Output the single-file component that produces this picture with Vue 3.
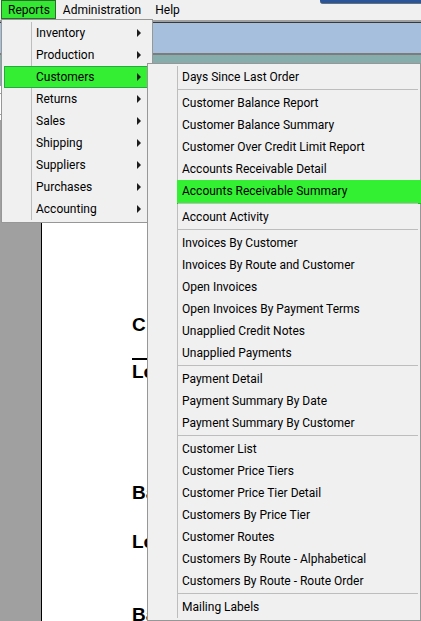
<template>
  <div class="app">
    <nav class="menubar">
      <div class="menu-root">
        <button type="button" class="root-btn active">Reports</button>
        <ul class="popup reports">
          <li v-for="item in reports" :key="item">
            <button type="button" class="item" :class="{ open: item === openMenu }">
              <span>{{ item }}</span>
              <svg class="arrow" width="4" height="8" viewBox="0 0 4 8">
                <path d="M0 0L4 4L0 8Z" fill="#1c1c1c" />
              </svg>
            </button>
            <ul v-if="item === openMenu" class="popup submenu">
              <template v-for="(group, i) in customerGroups" :key="i">
                <li v-if="i > 0" class="separator"></li>
                <li v-for="name in group" :key="name">
                  <button type="button" class="item" :class="{ selected: name === selected }">{{ name }}</button>
                </li>
              </template>
            </ul>
          </li>
        </ul>
      </div>
      <button type="button" class="root-btn">Administration</button>
      <button type="button" class="root-btn">Help</button>
      <div class="window-tab"></div>
    </nav>

    <div class="toolbar"></div>
    <div class="teal-bar"></div>
    <div class="controls">
      <div class="control-line"></div>
    </div>
    <main class="viewer">
      <section class="paper">
        <p class="heading">C</p>
        <p class="ruled">Lo</p>
        <p class="balance">Ba</p>
        <p class="location">Lo</p>
        <p class="last">Ba</p>
      </section>
    </main>
  </div>
</template>

<script setup>
import { ref } from 'vue'

const openMenu = ref('Customers')
const selected = ref('Accounts Receivable Summary')

const reports = [
  'Inventory',
  'Production',
  'Customers',
  'Returns',
  'Sales',
  'Shipping',
  'Suppliers',
  'Purchases',
  'Accounting'
]

// each group is divided from the next by a separator
const customerGroups = [
  ['Days Since Last Order'],
  [
    'Customer Balance Report',
    'Customer Balance Summary',
    'Customer Over Credit Limit Report',
    'Accounts Receivable Detail',
    'Accounts Receivable Summary'
  ],
  ['Account Activity'],
  [
    'Invoices By Customer',
    'Invoices By Route and Customer',
    'Open Invoices',
    'Open Invoices By Payment Terms',
    'Unapplied Credit Notes',
    'Unapplied Payments'
  ],
  ['Payment Detail', 'Payment Summary By Date', 'Payment Summary By Customer'],
  [
    'Customer List',
    'Customer Price Tiers',
    'Customer Price Tier Detail',
    'Customers By Price Tier',
    'Customer Routes',
    'Customers By Route - Alphabetical',
    'Customers By Route - Route Order'
  ],
  ['Mailing Labels']
]
</script>

<style>
body {
  margin: 0;
}
</style>

<style scoped>
.app {
  display: flex;
  flex-direction: column;
  height: 100vh;
  min-height: 621px;
  overflow: hidden;
  background: #fff;
  color: #000;
  font-family: "Segoe UI", Roboto, "Open Sans", sans-serif;
  font-size: 12px;
  line-height: 20px;
}

button {
  margin: 0;
  padding: 0;
  border: 0;
  background: none;
  color: inherit;
  font: inherit;
  text-align: left;
  white-space: nowrap;
}

.menubar {
  position: relative;
  z-index: 1;
  display: flex;
  flex: none;
  height: 20px;
  padding-left: 1px;
  background: #f0f0f0;
  border-bottom: 2px solid #a0a0a0;
}

.menu-root {
  position: relative;
}

.root-btn {
  display: block;
  box-sizing: border-box;
  height: 19px;
  padding: 1px 7px 0;
  line-height: 18px;
}

.root-btn.active {
  padding: 1px 5px 0 6px;
  border: 1px solid #2c6b2c;
  background: #33e733;
  line-height: 16px;
}

.window-tab {
  width: 101px;
  height: 3px;
  margin-left: auto;
  background: #2a5699;
  border-bottom: 1px solid #687078;
  border-bottom-left-radius: 3px;
}

.popup {
  position: absolute;
  box-sizing: border-box;
  margin: 0;
  padding: 2px;
  list-style: none;
  border: 1px solid #979797;
  background: linear-gradient(#bdbdbd, #bdbdbd) 29px 2px / 1px calc(100% - 4px) no-repeat #f0f0f0;
}

.reports {
  top: 19px;
  left: 0;
  width: 152px;
}

.reports > li {
  position: relative;
}

.item {
  display: flex;
  align-items: center;
  justify-content: space-between;
  box-sizing: border-box;
  width: 100%;
  height: 22px;
  padding: 0 9px 0 32px;
}

.item.open {
  box-shadow: inset 0 0 0 1px #28a745;
  background: #33ee33;
}

.arrow {
  flex: none;
}

.submenu {
  top: -3px;
  left: 143px;
  width: calc(100vw - 147px);
}

.item.selected {
  width: calc(100% - 24px);
  height: 24px;
  margin: 0 -3px -2px 27px;
  padding: 0 0 1px 5px;
  border-bottom: 1px solid #2cb52c;
  background: #33f033;
}

.separator {
  height: 1px;
  margin: 1px 0 2px 28px;
  background: #bdbdbd;
}

.toolbar {
  flex: none;
  height: 30px;
  border-top: 1px solid #383838;
  border-bottom: 2px solid #7c7c7c;
  background: #a6bfdc;
}

.teal-bar {
  flex: none;
  height: 31px;
  background: #86acac;
}

.controls {
  flex: none;
  height: 34px;
  padding-top: 7px;
  box-sizing: border-box;
  background: #fff;
}

.control-line {
  height: 20px;
  border: 1px solid #a0a0a0;
  border-width: 1px 0;
}

.viewer {
  flex: 1;
  min-height: 0;
  padding-left: 41px;
  background: #a0a0a0;
}

.paper {
  height: 100%;
  box-sizing: border-box;
  padding: 193px 0 0 90px;
  border-left: 1px solid #000;
  background: #fff;
  font-family: "Liberation Sans", Arial, sans-serif;
  font-size: 19px;
  font-weight: bold;
  line-height: 24px;
}

.paper p {
  margin: 0;
}

.paper .ruled {
  margin-top: 21px;
  border-top: 2px solid #000;
}

.paper .balance {
  margin-top: 97px;
}

.paper .location {
  margin-top: 25px;
}

.paper .last {
  margin-top: 49px;
}
</style>
